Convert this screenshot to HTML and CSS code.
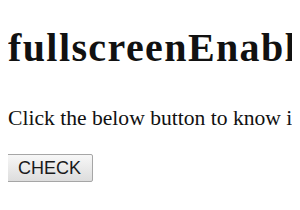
FILE: index.html
```html
<!DOCTYPE html>
<html lang="en">
    <head>
        <meta charset="UTF-8">
        <title>fullscreenEnabled</title>
        <link rel="stylesheet" href="styles.css">
    </head>
    <body>
        <h1 class="title">fullscreenEnabled</h1>

        <p class="info">Click the below button to know if fullscreen is enabled or not</p>

        <div class="actions">
            <button class="button" type="button">CHECK</button>
        </div>
    </body>
</html>
```

FILE: styles.css
```css
html {
    overflow: hidden;
}

body {
    margin: 0 8px;
    background: #fff;
    color: #111;
    font-family: "Liberation Serif", serif;
    white-space: nowrap;
}

.title {
    font-size: 40px;
    font-weight: bold;
    letter-spacing: 1.4px;
    margin: 24px 0 35px 0;
}

.info {
    font-size: 21.6px;
    margin: 0 0 23px 0;
}

.actions {
    display: flex;
}

.button {
    font-family: "Liberation Sans", Arial, sans-serif;
    font-size: 18px;
    line-height: 20px;
    color: #1a1a1a;
    margin-left: -2px;
    padding: 3px 11px;
    border: 1px solid #a6a6a6;
    border-radius: 2px;
    background: linear-gradient(#f7f7f7, #dddddd);
}
```
